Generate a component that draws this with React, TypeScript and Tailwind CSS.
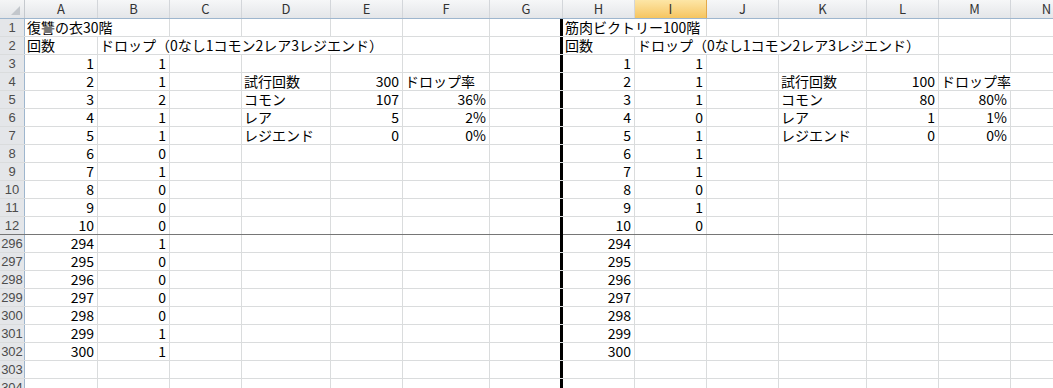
import type { ReactNode } from "react";

type Value = string | number;
type RowData = { label: number; cells: Record<string, Value> };

const cols = [
  { id: "A", w: "w-[73px]" },
  { id: "B", w: "w-[72px]" },
  { id: "C", w: "w-[72px]" },
  { id: "D", w: "w-[89px]" },
  { id: "E", w: "w-[72px]" },
  { id: "F", w: "w-[87px]" },
  { id: "G", w: "w-[73px]" },
  { id: "H", w: "w-[72px]" },
  { id: "I", w: "w-[72px]" },
  { id: "J", w: "w-[72px]" },
  { id: "K", w: "w-[88px]" },
  { id: "L", w: "w-[72px]" },
  { id: "M", w: "w-[72px]" },
  { id: "N", w: "w-[72px]" },
];

const DROP_HEADER = "ドロップ（0なし1コモン2レア3レジエンド）";
const leftDrops = [1, 1, 2, 1, 1, 0, 1, 0, 0, 0];
const rightDrops = [1, 1, 1, 0, 1, 1, 1, 0, 1, 0];
const tailDrops = [1, 0, 0, 0, 0, 1, 1];

const stats: Record<number, Record<string, Value>> = {
  4: { D: "試行回数", E: 300, F: "ドロップ率", K: "試行回数", L: 100, M: "ドロップ率" },
  5: { D: "コモン", E: 107, F: "36%", K: "コモン", L: 80, M: "80%" },
  6: { D: "レア", E: 5, F: "2%", K: "レア", L: 1, M: "1%" },
  7: { D: "レジエンド", E: 0, F: "0%", K: "レジエンド", L: 0, M: "0%" },
};

const topRows: RowData[] = [
  { label: 1, cells: { A: "復讐の衣30階", H: "筋肉ビクトリー100階" } },
  { label: 2, cells: { A: "回数", B: DROP_HEADER, H: "回数", I: DROP_HEADER } },
  ...leftDrops.map((d, i) => ({
    label: i + 3,
    cells: { A: i + 1, B: d, H: i + 1, I: rightDrops[i], ...(stats[i + 3] ?? {}) },
  })),
];

const bottomRows: RowData[] = [
  ...tailDrops.map((d, i) => ({ label: 296 + i, cells: { A: 294 + i, B: d, H: 294 + i } })),
  { label: 303, cells: {} },
  { label: 304, cells: {} },
];

function isRight(v: Value) {
  return typeof v === "number" || v.endsWith("%");
}

function Cell({ w, id, value }: { w: string; id: string; value?: Value }) {
  const edge =
    id === "G" ? "border-r-[3px] border-r-black" : "border-r border-r-[#dadcdd]";
  let body: ReactNode = null;
  if (value !== undefined) {
    body = isRight(value) ? (
      <span className="ml-auto pr-[3px]">{value}</span>
    ) : (
      <span className="relative z-10 whitespace-nowrap bg-white pl-[2px] pr-[2px]">{value}</span>
    );
  }
  return (
    <div className={`${w} ${edge} relative flex h-full shrink-0 items-center overflow-visible leading-[17px]`}>
      {body}
    </div>
  );
}

function SheetRow({ row }: { row: RowData }) {
  return (
    <div className="flex h-[18px] shrink-0 border-b border-b-[#dadcdd]">
      <div className="flex h-full w-[25px] shrink-0 items-center justify-center border-r border-r-[#9eb6ce] bg-[#e4e6e9] font-[Liberation_Sans,sans-serif] text-[13px] text-[#4c4c4c]">
        {row.label}
      </div>
      {cols.map((c) => (
        <Cell key={c.id} w={c.w} id={c.id} value={row.cells[c.id]} />
      ))}
    </div>
  );
}

export default function App() {
  return (
    <div className="h-[388px] w-[1053px] overflow-hidden bg-white font-[Noto_Sans_CJK_JP,sans-serif] text-[14px] text-black">
      <div className="w-[1100px]">
        {/* column letters */}
        <div className="flex h-[19px] border-b border-b-[#9eb6ce]">
          <div className="relative h-full w-[25px] shrink-0 border-r border-r-[#c5c9ce] bg-linear-to-b from-[#f4f5f6] to-[#e3e5e8]">
            <svg className="absolute bottom-[3px] right-[4px]" width="9" height="9" viewBox="0 0 9 9">
              <polygon points="9,0 9,9 0,9" fill="#c3c7cc" />
            </svg>
          </div>
          {cols.map((c) =>
            c.id === "I" ? (
              <div
                key={c.id}
                className={`${c.w} flex h-full shrink-0 items-center justify-center border-r border-r-[#e3a94a] bg-linear-to-b from-[#fde6a6] to-[#f6c55f] text-[13px] text-[#333]`}
              >
                {c.id}
              </div>
            ) : (
              <div
                key={c.id}
                className={`${c.w} flex h-full shrink-0 items-center justify-center border-r border-r-[#d3d6da] bg-linear-to-b from-[#f6f7f8] to-[#e4e6e9] text-[13px] text-[#333]`}
              >
                {c.id}
              </div>
            )
          )}
        </div>

        {topRows.map((r) => (
          <SheetRow key={r.label} row={r} />
        ))}

        {/* frozen pane split */}
        <div className="relative -mt-px h-px bg-[#767676]">
          <div className="absolute left-[560px] top-0 h-px w-[3px] bg-black" />
        </div>

        {bottomRows.map((r) => (
          <SheetRow key={r.label} row={r} />
        ))}
      </div>
    </div>
  );
}
